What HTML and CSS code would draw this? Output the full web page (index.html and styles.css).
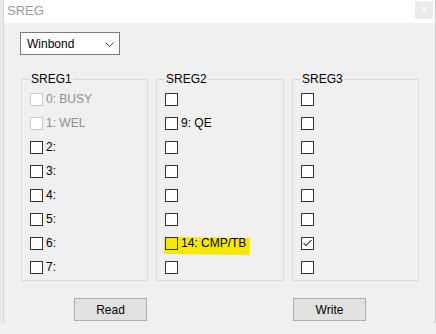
FILE: index.html
```html
<!DOCTYPE html>
<html lang="en">
<head>
    <meta charset="UTF-8">
    <meta name="viewport" content="width=device-width, initial-scale=1.0">
    <title>SREG</title>
    <link rel="stylesheet" href="styles.css">
</head>
<body>
    <div class="app">
        <div class="edge"></div>
        <div class="window">
            <div class="titlebar">
                <span class="title">SREG</span>
                <span class="close">x</span>
            </div>
            <div class="content">
                <div class="select">
                    <span>Winbond</span>
                    <svg class="chevron" width="9" height="5" viewBox="0 0 9 5">
                        <polyline points="0.5,0.5 4.5,4.5 8.5,0.5" fill="none" stroke="#444" stroke-width="1"/>
                    </svg>
                </div>

                <div class="groups">
                    <fieldset class="group">
                        <legend>SREG1</legend>
                        <div class="row disabled"><span class="box"></span>0: BUSY</div>
                        <div class="row disabled"><span class="box"></span>1: WEL</div>
                        <div class="row"><span class="box"></span>2:</div>
                        <div class="row"><span class="box"></span>3:</div>
                        <div class="row"><span class="box"></span>4:</div>
                        <div class="row"><span class="box"></span>5:</div>
                        <div class="row"><span class="box"></span>6:</div>
                        <div class="row"><span class="box"></span>7:</div>
                    </fieldset>
                    <fieldset class="group">
                        <legend>SREG2</legend>
                        <div class="row"><span class="box"></span></div>
                        <div class="row"><span class="box"></span>9: QE</div>
                        <div class="row"><span class="box"></span></div>
                        <div class="row"><span class="box"></span></div>
                        <div class="row"><span class="box"></span></div>
                        <div class="row"><span class="box"></span></div>
                        <div class="row marked">
                            <span class="highlight"></span>
                            <span class="box"></span>
                            <span class="label">14: CMP/TB</span>
                        </div>
                        <div class="row"><span class="box"></span></div>
                    </fieldset>
                    <fieldset class="group">
                        <legend>SREG3</legend>
                        <div class="row"><span class="box"></span></div>
                        <div class="row"><span class="box"></span></div>
                        <div class="row"><span class="box"></span></div>
                        <div class="row"><span class="box"></span></div>
                        <div class="row"><span class="box"></span></div>
                        <div class="row"><span class="box"></span></div>
                        <div class="row">
                            <span class="box">
                                <svg width="11" height="11" viewBox="0 0 11 11">
                                    <polyline points="1.5,5 4,7.5 9.5,2" fill="none" stroke="#555" stroke-width="1.3"/>
                                </svg>
                            </span>
                        </div>
                        <div class="row"><span class="box"></span></div>
                    </fieldset>
                </div>

                <div class="buttons">
                    <button class="btn read">Read</button>
                    <span></span>
                    <button class="btn write">Write</button>
                </div>
            </div>
        </div>
    </div>
</body>
</html>
```

FILE: styles.css
```css
body {
    margin: 0;
    background-color: #f0f0f0;
    font-family: "Liberation Sans", Arial, sans-serif;
    font-size: 12px;
    color: #000;
}

.app {
    display: flex;
    height: 323px;
}

.edge {
    width: 3px;
    background-color: #e9e9e9;
    border-right: 1px solid #d6d6d6;
}

.window {
    flex: 1;
    border-right: 1px solid #c9c9c9;
}

.titlebar {
    height: 23px;
    background-color: #fff;
    display: flex;
    justify-content: space-between;
    align-items: flex-start;
}

.title {
    color: #9a9a9a;
    font-size: 13px;
    line-height: 22px;
    padding-left: 3px;
}

.close {
    width: 18px;
    height: 18px;
    margin-top: 1px;
    margin-right: 2px;
    background-color: #ebebeb;
    color: #fafafa;
    font-size: 11px;
    font-weight: bold;
    line-height: 17px;
    text-align: center;
}

.content {
    padding: 9px 0 0 16px;
}

.select {
    width: 100px;
    height: 23px;
    box-sizing: border-box;
    border: 1px solid #7a7a7a;
    background-color: #fff;
    display: flex;
    align-items: center;
    justify-content: space-between;
    padding: 0 5px 0 6px;
}

.chevron {
    margin-top: 1px;
}

.groups {
    display: grid;
    grid-template-columns: 127px 128px 127px;
    column-gap: 8px;
    margin: 16px 0 0 1px;
}

.group {
    margin: 0;
    padding: 6px 0 6px 8px;
    border: 1px solid #dcdcdc;
    display: flex;
    flex-direction: column;
    gap: 11px;
}

.group legend {
    padding: 0 1px;
    line-height: 16px;
}

.row {
    position: relative;
    height: 13px;
    line-height: 13px;
    display: flex;
    align-items: center;
    gap: 3px;
    white-space: nowrap;
}

.box {
    position: relative;
    width: 13px;
    height: 13px;
    box-sizing: border-box;
    border: 1px solid #333;
    background-color: #fff;
    display: flex;
    align-items: center;
    justify-content: center;
}

.row.disabled {
    color: #8f8f8f;
}

.row.disabled .box {
    border-color: #cccccc;
}

.row.marked .box {
    background-color: transparent;
}

.label {
    position: relative;
}

.highlight {
    position: absolute;
    left: -1px;
    top: 0;
    width: 86px;
    height: 17px;
    background-color: #f5e900;
    transform: rotate(0.6deg);
    transform-origin: left top;
}

.buttons {
    display: grid;
    grid-template-columns: 127px 144px 127px;
    margin: 17px 0 0 1px;
}

.btn {
    width: 73px;
    height: 23px;
    border: 1px solid #adadad;
    background-color: #e1e1e1;
    font-family: "Liberation Sans", Arial, sans-serif;
    font-size: 12px;
    color: #000;
    padding: 0;
}

.btn.read {
    justify-self: end;
    margin-right: 1px;
}

.btn.write {
    justify-self: start;
    margin-left: 1px;
}
```
